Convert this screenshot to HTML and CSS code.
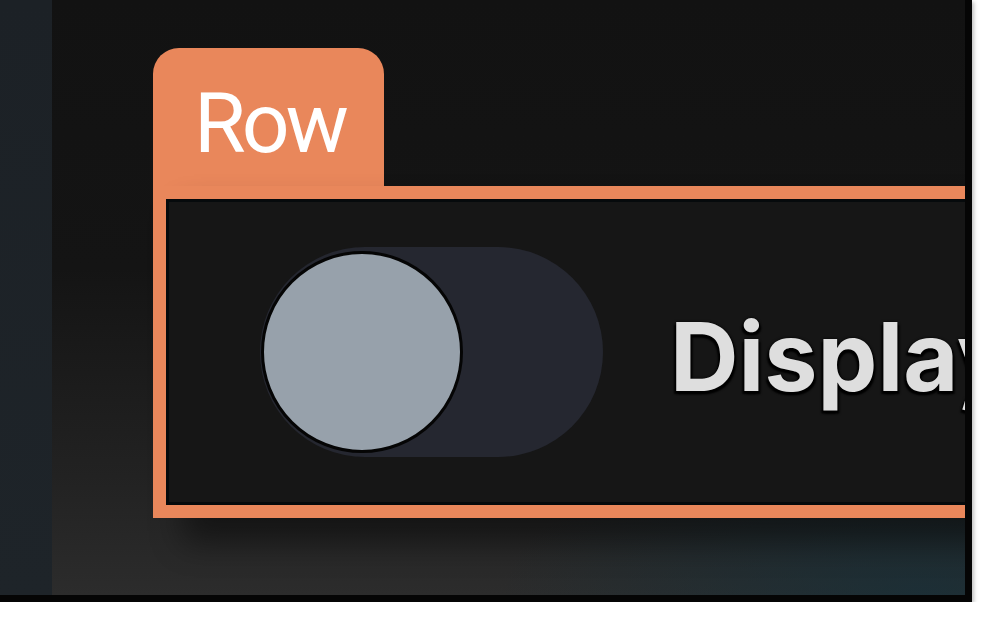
FILE: index.html
```html
<!DOCTYPE html>
<html>
<head>
<meta charset="utf-8">
<link rel="stylesheet" href="styles.css">
</head>
<body>
<div class="screen">
  <div class="side"></div>
  <div class="main">
    <div class="block">
      <div class="tab">Row</div>
      <div class="frame">
        <div class="toggle"><div class="knob"></div></div>
        <div class="label">Display</div>
      </div>
    </div>
  </div>
</div>
</body>
</html>
```
FILE: styles.css
```css
html, body {
  margin: 0;
  padding: 0;
  background: #ffffff;
}
.screen {
  width: 965px;
  height: 595px;
  display: flex;
  overflow: hidden;
  border-right: 7px solid #050505;
  border-bottom: 7px solid #050505;
  box-shadow: 2px 2px 4px rgba(0,0,0,0.25);
}
.side {
  width: 52px;
  flex: none;
  background: linear-gradient(to bottom, #1c2126, #1e2429);
}
.main {
  flex: 1;
  min-width: 0;
  padding: 48px 0 0 101px;
  background:
    radial-gradient(ellipse 420px 160px at 95% 100%, rgba(22,48,58,0.7), rgba(22,48,58,0) 100%),
    linear-gradient(to bottom, #121212 0%, #141414 45%, #222222 80%, #2c2c2c 100%);
}
.block {
  display: flex;
  flex-direction: column;
  align-items: flex-start;
}
.tab {
  width: 190px;
  height: 105px;
  padding: 34px 0 0 41px;
  box-sizing: content-box;
  background: #e9875b;
  border-radius: 26px 26px 0 0;
  color: #ffffff;
  font-family: Roboto, "Liberation Sans", sans-serif;
  font-size: 84px;
  letter-spacing: -4px;
  line-height: 1;
}
.frame {
  width: 900px;
  height: 306px;
  margin-top: -1px;
  border: 13px solid #e9875b;
  background: #161616;
  box-shadow: inset 0 0 0 3px #060a0c, 30px 24px 30px rgba(0,0,0,0.45);
  display: flex;
  align-items: center;
  padding-left: 94px;
  gap: 67px;
}
.toggle {
  width: 343px;
  height: 210px;
  flex: none;
  border-radius: 105px;
  background: #252730;
  display: flex;
  align-items: center;
}
.knob {
  width: 196px;
  height: 196px;
  margin-left: 1px;
  border-radius: 50%;
  background: #97a1ab;
  border: 3px solid #050505;
}
.label {
  font-family: Inter, "DejaVu Sans", sans-serif;
  font-weight: 700;
  font-size: 95px;
  line-height: 1;
  color: #dedede;
  white-space: nowrap;
  text-shadow: -2px 3px 2px #000000, 2px 3px 2px #000000, 0 0 3px #000000;
  margin-top: 8px;
}
```
